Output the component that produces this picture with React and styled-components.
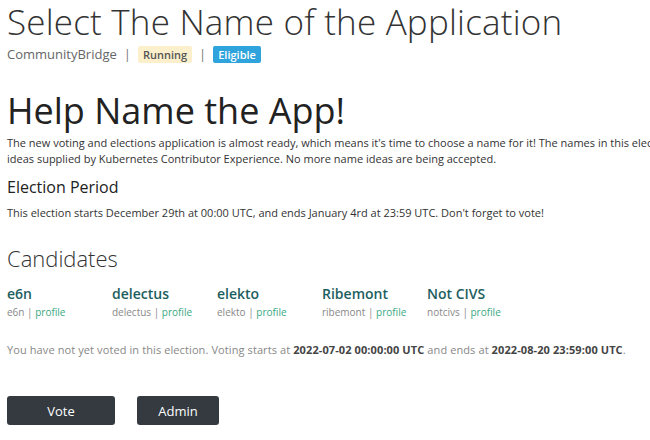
import React from 'react'
import styled, { createGlobalStyle } from 'styled-components'

const GlobalStyle = createGlobalStyle`
  html, body {
    margin: 0;
    padding: 0;
    overflow: hidden;
    background: #fff;
  }
  body {
    font-family: "Open Sans", "Liberation Sans", sans-serif;
    color: #333;
  }
`

const candidates = [
  { name: 'e6n', handle: 'e6n' },
  { name: 'delectus', handle: 'delectus' },
  { name: 'elekto', handle: 'elekto' },
  { name: 'Ribemont', handle: 'ribemont' },
  { name: 'Not CIVS', handle: 'notcivs' },
]

const App = () => {
  return (
    <Page>
      <GlobalStyle />
      <Title>Select The Name of the Application</Title>
      <Meta>
        <span>CommunityBridge</span>
        <Sep>|</Sep>
        <Badge kind="running">Running</Badge>
        <Sep>|</Sep>
        <Badge kind="eligible">Eligible</Badge>
      </Meta>

      <Heading>Help Name the App!</Heading>
      <Para>
        <Line>The new voting and elections application is almost ready, which means it's time to choose a name for it! The names in this election are</Line>
        <Line>ideas supplied by Kubernetes Contributor Experience. No more name ideas are being accepted.</Line>
      </Para>

      <SubHeading>Election Period</SubHeading>
      <Para>
        <Line>This election starts December 29th at 00:00 UTC, and ends January 4rd at 23:59 UTC. Don't forget to vote!</Line>
      </Para>

      <SectionTitle>Candidates</SectionTitle>
      <CandidateRow>
        {candidates.map(c => (
          <Candidate key={c.handle}>
            <CandidateName>{c.name}</CandidateName>
            <CandidateMeta>
              {c.handle} | <ProfileLink href="#">profile</ProfileLink>
            </CandidateMeta>
          </Candidate>
        ))}
      </CandidateRow>

      <Notice>
        You have not yet voted in this election. Voting starts at <b>2022-07-02 00:00:00 UTC</b> and ends at <b>2022-08-20 23:59:00 UTC</b>.
      </Notice>

      <Actions>
        <Button wide>Vote</Button>
        <Button>Admin</Button>
      </Actions>
    </Page>
  )
}

export default App

const Page = styled.div`
  padding: 0 7px;
`

const Title = styled.h1`
  margin: 0;
  padding-top: 1px;
  font-size: 35px;
  line-height: 42px;
  font-weight: 300;
  color: #333;
  letter-spacing: 0.2px;
  white-space: nowrap;
`

const Meta = styled.div`
  display: flex;
  align-items: center;
  margin-top: 2px;
  font-size: 13px;
  color: #666;
  height: 18px;
`

const Sep = styled.span`
  margin: 0 7px;
  color: #777;
`

const Badge = styled.span`
  padding: 1px 5px;
  border-radius: 2px;
  font-size: 11px;
  line-height: 15px;
  font-weight: 600;
  ${({ kind }) => kind === 'running' && `
    background: #fbefcc;
    color: #555;
  `}
  ${({ kind }) => kind === 'eligible' && `
    background: #2fa3db;
    color: #fff;
  `}
`

const Heading = styled.h2`
  margin: 26px 0 0;
  font-size: 36px;
  line-height: 44px;
  font-weight: 500;
  color: #222;
`

const Para = styled.div`
  margin-top: 2px;
  font-size: 11px;
  line-height: 16px;
  color: #333;
`

const Line = styled.div`
  white-space: nowrap;
`

const SubHeading = styled.h3`
  margin: 8px 0 6px;
  font-size: 16px;
  line-height: 24px;
  font-weight: 500;
  color: #222;
`

const SectionTitle = styled.h3`
  margin: 22px 0 0;
  font-size: 22px;
  line-height: 30px;
  font-weight: 300;
  color: #333;
`

const CandidateRow = styled.div`
  display: flex;
  margin-top: 12px;
`

const Candidate = styled.div`
  width: 105px;
`

const CandidateName = styled.div`
  font-size: 14px;
  line-height: 18px;
  font-weight: 600;
  color: #1d5e61;
`

const CandidateMeta = styled.div`
  margin-top: 1px;
  font-size: 10px;
  line-height: 16px;
  color: #888;
`

const ProfileLink = styled.a`
  color: #3aa882;
  text-decoration: none;
`

const Notice = styled.div`
  margin-top: 22px;
  font-size: 11px;
  letter-spacing: 0.1px;
  line-height: 16px;
  color: #888;
  b {
    color: #444;
    font-weight: 700;
  }
`

const Actions = styled.div`
  display: flex;
  gap: 22px;
  margin-top: 38px;
`

const Button = styled.button`
  width: ${({ wide }) => (wide ? '108px' : '82px')};
  height: 29px;
  border: none;
  border-radius: 3px;
  background: #343a40;
  color: #fff;
  font-family: inherit;
  font-size: 13px;
  cursor: pointer;
`
